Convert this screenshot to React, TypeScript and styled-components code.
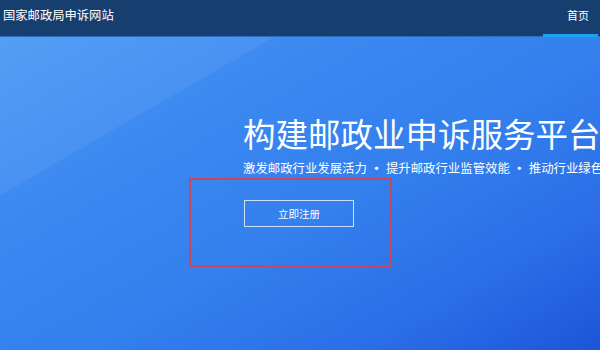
import React from "react";
import styled, { createGlobalStyle } from "styled-components";

const Global = createGlobalStyle`
  html, body { margin: 0; padding: 0; }
  body {
    width: 600px;
    height: 350px;
    overflow: hidden;
    font-family: "Noto Sans CJK SC", "Noto Sans", sans-serif;
    background: #2f78ec;
  }
  * { box-sizing: border-box; }
`;

const Page = styled.div`
  width: 600px;
  height: 350px;
  display: flex;
  flex-direction: column;
  overflow: hidden;
`;

const Header = styled.header`
  height: 37px;
  flex: none;
  display: flex;
  align-items: stretch;
  justify-content: space-between;
  background: #163f70;
  border-bottom: 1px solid #2f6cbf;
`;

const SiteTitle = styled.div`
  padding: 6px 0 0 3px;
  color: #ffffff;
  font-size: 12.3px;
  line-height: 18px;
  letter-spacing: 0;
`;

const Nav = styled.nav`
  display: flex;
  align-items: stretch;
  margin-bottom: -1px;
`;

const NavItem = styled.a<{ $active?: boolean }>`
  display: flex;
  align-items: flex-start;
  padding: 7px 9px 0 24px;
  width: 55px;
  margin-right: 2px;
  color: #ffffff;
  font-size: 11px;
  line-height: 16px;
  text-decoration: none;
  border-bottom: 3px solid ${(p) => (p.$active ? "#1ea3f4" : "transparent")};
`;

const Hero = styled.section`
  flex: 1;
  background:
    linear-gradient(150deg, rgba(255, 255, 255, 0.06) 137px, rgba(255, 255, 255, 0) 137px),
    linear-gradient(150deg, #4a98f4 0%, #3b88f1 30%, #3380ee 55%, #2b6de6 80%, #1c55d8 100%);
  padding: 74px 0 0 243px;
  overflow: hidden;
`;

const Title = styled.h1`
  margin: 0;
  color: #ffffff;
  font-weight: 400;
  font-size: 32.5px;
  line-height: 44px;
  white-space: nowrap;
  letter-spacing: 0;
`;

const Slogan = styled.p`
  margin: 4px 0 0 0;
  color: #ffffff;
  font-size: 12.4px;
  line-height: 18px;
  white-space: nowrap;
  display: flex;
  align-items: center;
`;

const Phrase = styled.span`
  flex: none;
`;

const Dot = styled.span`
  flex: none;
  display: inline-block;
  width: 19px;
  text-align: center;
  font-size: 13px;
  font-weight: 700;
`;

const Highlight = styled.div`
  margin: 1px 0 0 -54px;
  width: 203px;
  height: 89px;
  border: 2px solid #c9475b;
  padding: 19px 0 0 53px;
`;

const RegisterButton = styled.button`
  width: 110px;
  height: 27px;
  background: transparent;
  border: 1px solid rgba(255, 255, 255, 0.75);
  color: #ffffff;
  font-family: "Noto Sans CJK SC", "Noto Sans", sans-serif;
  font-size: 10.5px;
  line-height: 25px;
  padding: 0;
  cursor: pointer;
`;

export default function App() {
  const slogans = ["激发邮政行业发展活力", "提升邮政行业监管效能", "推动行业绿色发展"];
  return (
    <>
      <Global />
      <Page>
        <Header>
          <SiteTitle>国家邮政局申诉网站</SiteTitle>
          <Nav>
            <NavItem $active href="#">首页</NavItem>
          </Nav>
        </Header>
        <Hero>
          <Title>构建邮政业申诉服务平台</Title>
          <Slogan>
            {slogans.map((s, i) => (
              <React.Fragment key={s}>
                {i > 0 && <Dot>•</Dot>}
                <Phrase>{s}</Phrase>
              </React.Fragment>
            ))}
          </Slogan>
          <Highlight>
            <RegisterButton>立即注册</RegisterButton>
          </Highlight>
        </Hero>
      </Page>
    </>
  );
}
